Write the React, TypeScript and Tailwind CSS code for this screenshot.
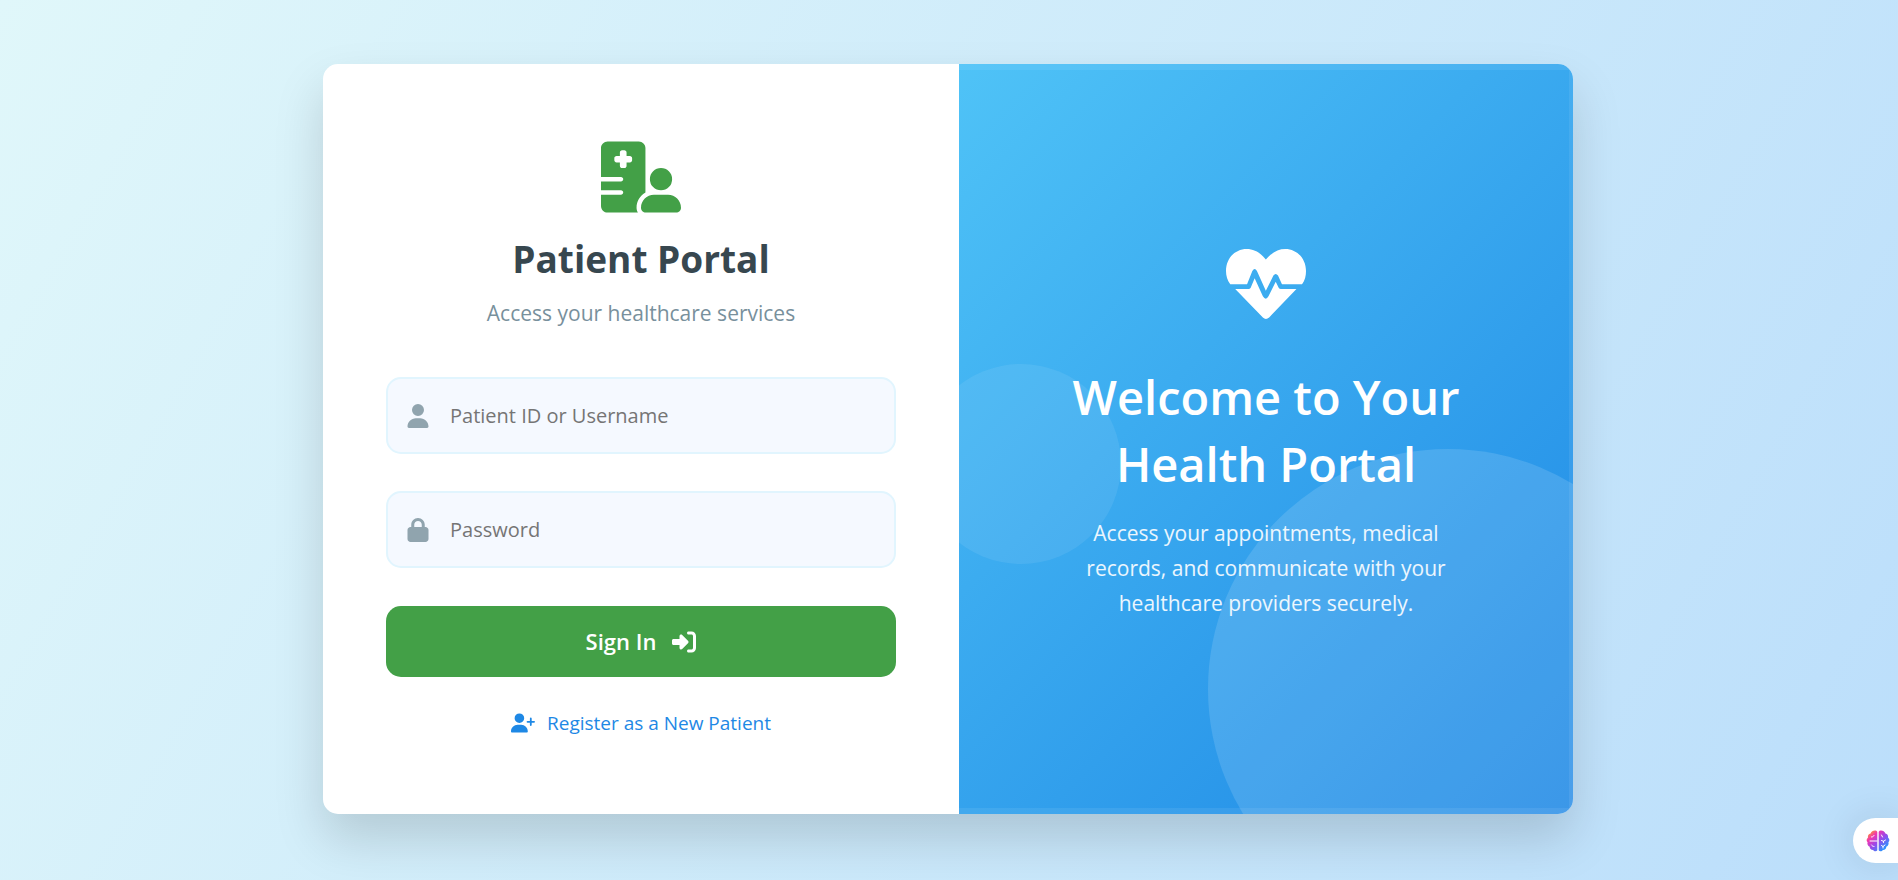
import { useState } from 'react';
import type { ReactNode } from 'react';
import { FaHospitalUser, FaLock, FaRightToBracket, FaUser, FaUserPlus } from 'react-icons/fa6';

interface FieldProps {
    id: string;
    type: string;
    label: string;
    icon: ReactNode;
    value: string;
    onChange: (value: string) => void;
}

function Field({ id, type, label, icon, value, onChange }: FieldProps) {
    return (
        <div className="flex h-[77px] items-center gap-5 rounded-[15px] border-2 border-[#e1f5fe] bg-[#f5f9ff] px-[18px] focus-within:border-[#4fc3f7]">
            <label htmlFor={id} aria-label={label} className="text-[#90a4ae]">{icon}</label>
            <input
                id={id}
                type={type}
                placeholder={label}
                value={value}
                onChange={e => onChange(e.target.value)}
                className="min-w-0 flex-1 bg-transparent text-[20px] text-[#37474f] outline-none placeholder:text-[#757575]"
            />
        </div>
    );
}

function HeartbeatIcon() {
    return (
        <svg viewBox="78 38 243 243" fill="currentColor" className="relative size-20" aria-hidden="true">
            <path d="M199 85C180 62 162 53 141 53C105 53 78 82 78 120C78 135 82 148 91 160H142L158 120Q165 108 172 120L199 180L222 134Q229 124 236 134L248 160H309C318 148 321 135 321 120C321 82 293 53 258 53C237 53 219 62 199 85Z" />
            <path d="M106 175H146Q151 175 153 171L165 142L190 197Q199 211 207 197L229 153L238 171Q240 175 245 175H292L209 261Q199 270 190 261Z" />
        </svg>
    );
}

function BrainIcon() {
    return (
        <svg viewBox="0 0 24 24" className="size-6" aria-hidden="true">
            <defs>
                <linearGradient id="brain" gradientUnits="userSpaceOnUse" x1="4" y1="2" x2="20" y2="20">
                    <stop offset="0" stopColor="#ff9a2e" />
                    <stop offset="0.25" stopColor="#f035b0" />
                    <stop offset="0.55" stopColor="#9a48ea" />
                    <stop offset="1" stopColor="#1f9cff" />
                </linearGradient>
            </defs>
            <path
                fill="url(#brain)"
                d="M11.300 3v18.300c-.7 1.200-3.300 1.200-4.200-.4-2 .1-3.500-1.300-3.400-3.200C1.800 16.800.9 15 1.600 13.200.2 11.900.3 9.800 1.900 8.700 1.700 6.500 2.700 4.900 4.600 4.600 5.500 1.500 10.200.4 11.300 3zM12.700 3v18.300c.7 1.200 3.300 1.200 4.200-.4 2 .1 3.500-1.300 3.400-3.200 1.900-.9 2.800-2.700 2.100-4.500 1.400-1.300 1.300-3.400-.3-4.500.2-2.200-.8-3.800-2.700-4.100C18.500 1.500 13.800.4 12.700 3z"
            />
            <path
                fill="none"
                stroke="#fff"
                strokeLinecap="round"
                d="M11 12H4M5.500 8c1.500 0 2-.7 2.500-1.500M5.500 16c.5 1 1.500 1.500 2.500 1.500M15.500 6l1 2M15.500 11.500l2 .8 2-1.300M17.500 12.300v1.200M15.500 16.500l1.500 1 2-1.500M17 17.500v1.500"
            />
        </svg>
    );
}

export default function App() {
    const [username, setUsername] = useState('');
    const [password, setPassword] = useState('');

    return (
        <div className="flex min-h-screen items-center justify-center overflow-hidden bg-[linear-gradient(120deg,#e0f7fa_0%,#bbdefb_100%)] pr-0.5 pb-0.5 font-['Open_Sans','Noto_Sans',sans-serif]">
            <main className="flex min-h-[750px] w-full max-w-[1250px] overflow-hidden rounded-[15px] bg-white shadow-[0_25px_50px_rgba(0,0,0,0.15)]">
                {/* Sign in */}
                <section className="flex w-[636px] shrink-0 flex-col justify-center px-[63px] pb-1">
                    <FaHospitalUser className="mx-auto h-20 w-auto text-[#43a047]" />
                    <h1 className="mt-3.5 text-center text-[37px] leading-[56px] font-bold text-[#37474f]">Patient Portal</h1>
                    <p className="mt-2.5 text-center text-[21px] leading-8 text-[#78909c]">Access your healthcare services</p>

                    <form className="mt-12" onSubmit={e => e.preventDefault()}>
                        <div className="space-y-[37px]">
                            <Field
                                id="username"
                                type="text"
                                label="Patient ID or Username"
                                icon={<FaUser className="h-6 w-auto" />}
                                value={username}
                                onChange={setUsername}
                            />
                            <Field
                                id="password"
                                type="password"
                                label="Password"
                                icon={<FaLock className="h-6 w-auto" />}
                                value={password}
                                onChange={setPassword}
                            />
                        </div>
                        <button
                            type="submit"
                            className="mt-[38px] flex h-[71px] w-full items-center justify-center gap-4 rounded-[15px] bg-[#43a047] text-[22px] font-semibold text-white hover:bg-[#388e3c]"
                        >
                            Sign In
                            <FaRightToBracket className="size-6" />
                        </button>
                    </form>

                    <a href="#register" className="mx-auto mt-8 flex items-center gap-3 text-[19px] leading-7 text-[#1e88e5]">
                        <FaUserPlus className="h-6 w-auto" />
                        Register as a New Patient
                    </a>
                </section>

                {/* Welcome */}
                <section className="relative flex flex-1 flex-col items-center justify-center overflow-hidden bg-[linear-gradient(135deg,#4fc3f7_0%,#1e88e5_100%)] px-[63px] pb-3.5 text-center text-white">
                    <div className="absolute -right-[115px] -bottom-[115px] size-[480px] rounded-full bg-white/[0.13]" />
                    <div className="absolute top-[300px] -left-[38px] size-[200px] rounded-full bg-white/[0.08]" />
                    <div className="absolute inset-0 border-y-[6px] border-r-4 border-white/[0.07]" />
                    <HeartbeatIcon />
                    <h2 className="relative mt-10 max-w-[420px] text-[47px] leading-[67px] font-semibold">Welcome to Your Health Portal</h2>
                    <p className="relative mt-[18px] max-w-[380px] text-[21px] leading-[35px] text-white/90">
                        Access your appointments, medical records, and communicate with your healthcare providers securely.
                    </p>
                </section>
            </main>

            <button
                type="button"
                aria-label="Assistant"
                className="fixed right-0 bottom-[17px] flex h-[45px] w-[45px] items-center rounded-l-full bg-white pl-[13px] shadow-[0_0_40px_rgba(0,0,0,0.12)]"
            >
                <BrainIcon />
            </button>
        </div>
    );
}
